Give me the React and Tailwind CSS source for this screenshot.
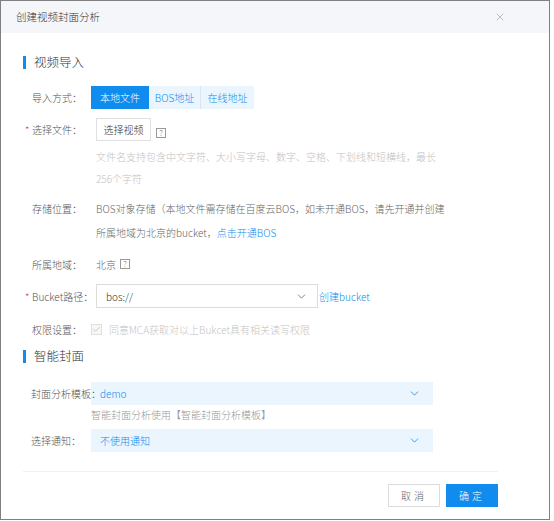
import { ChevronDown, X, Check } from 'lucide-react';

const FONT = { fontFamily: '"Noto Sans CJK SC", "Noto Sans", sans-serif' };

function Label({ required, children, className = '' }) {
  return (
    <div className={`relative w-[59px] shrink-0 whitespace-nowrap text-[10px] text-[#555] ${className}`}>
      {required && <span className="absolute left-[-7px] top-0 text-[#ea2e2e]">*</span>}
      {children}
    </div>
  );
}

function Help() {
  return (
    <span className="inline-flex h-[10px] w-[10px] items-center justify-center border border-[#999] text-[8px] leading-none text-[#666]">
      ?
    </span>
  );
}

function SectionTitle({ children, className = '' }) {
  return (
    <div className={`flex h-[20px] items-center ${className}`}>
      <span className="h-[13px] w-[3px] bg-[#108cee]" />
      <span className="ml-[8px] text-[12.5px] text-[#333]">{children}</span>
    </div>
  );
}

function BlueSelect({ value }) {
  return (
    <div className="flex h-[23px] w-[342px] items-center justify-between bg-[#eaf5fe] pl-[9px] pr-[12px] text-[10px] text-[#108cee]">
      <span>{value}</span>
      <ChevronDown size={13} strokeWidth={1.5} className="text-[#108cee]" />
    </div>
  );
}

export default function App() {
  return (
    <div className="h-[521px] w-[554px] bg-white font-light" style={FONT}>
      <div className="flex h-[520px] w-[550px] flex-col border border-[#808080]">
        {/* header */}
        <div className="flex h-[32px] shrink-0 items-center justify-between bg-[#f5f6fa] pl-[15px] pr-[43px]">
          <span className="text-[10.5px] text-[#333]">创建视频封面分析</span>
          <X size={12} strokeWidth={1.2} className="text-[#999]" />
        </div>

        <div className="pl-[22px]">
          <SectionTitle className="mt-[19px]">视频导入</SectionTitle>

          {/* 导入方式 */}
          <div className="mt-[14px] flex items-center pl-[9px]">
            <Label>导入方式：</Label>
            <div className="flex h-[23px] text-[10px]">
              <span className="flex w-[58px] items-center justify-center bg-[#108cee] text-white">本地文件</span>
              <span className="flex w-[52px] items-center justify-center border-r border-[#d8e6f2] bg-[#eaf5fe] text-[#108cee]">BOS地址</span>
              <span className="flex w-[53px] items-center justify-center bg-[#eaf5fe] text-[#108cee]">在线地址</span>
            </div>
          </div>

          {/* 选择文件 */}
          <div className="mt-[8px] flex items-center pl-[9px]">
            <Label required>选择文件：</Label>
            <div className="ml-[5px] flex items-center">
              <span className="flex h-[23px] w-[55px] items-center justify-center border border-[#e0e0e0] text-[10px] text-[#333]">选择视频</span>
              <span className="ml-[5px]"><Help /></span>
            </div>
          </div>
          <div className="mt-[5px] pl-[73px] text-[10px] leading-[22px] text-[#c2c2c2]">
            <div>文件名支持包含中文字符、大小写字母、数字、空格、下划线和短横线，最长</div>
            <div>256个字符</div>
          </div>

          {/* 存储位置 */}
          <div className="mt-[7px] flex items-start pl-[9px] leading-[24px]">
            <Label>存储位置：</Label>
            <div className="ml-[5px] text-[10px] text-[#666]">
              <div>BOS对象存储（本地文件需存储在百度云BOS，如未开通BOS，请先开通并创建</div>
              <div>
                所属地域为北京的bucket，<span className="text-[#108cee]">点击开通BOS</span>
              </div>
            </div>
          </div>

          {/* 所属地域 */}
          <div className="mt-[9px] flex h-[20px] items-center pl-[9px]">
            <Label>所属地域：</Label>
            <div className="ml-[5px] flex items-center gap-[4px] text-[10px] text-[#666]">
              <span>北京</span>
              <Help />
            </div>
          </div>

          {/* Bucket路径 */}
          <div className="mt-[10px] flex items-center pl-[9px]">
            <Label required>Bucket路径：</Label>
            <div className="ml-[5px] flex h-[24px] w-[222px] items-center justify-between border border-[#dcdcdc] pl-[9px] pr-[9px] text-[10px] text-[#333]">
              <span>bos://</span>
              <ChevronDown size={13} strokeWidth={1.5} className="text-[#666]" />
            </div>
            <span className="ml-[1px] text-[10px] text-[#108cee]">创建bucket</span>
          </div>

          {/* 权限设置 */}
          <div className="mt-[11px] flex h-[20px] items-center pl-[9px]">
            <Label>权限设置：</Label>
            <span className="flex h-[11px] w-[11px] items-center justify-center border border-[#e0e0e0] bg-[#f7f7f7]">
              <Check size={9} strokeWidth={2} className="text-[#bbb]" />
            </span>
            <span className="ml-[7px] text-[10px] text-[#c4c4c4]">同意MCA获取对以上Bukcet具有相关读写权限</span>
          </div>

          <SectionTitle className="mt-[7px]">智能封面</SectionTitle>

          {/* 封面分析模板 */}
          <div className="mt-[16px] flex items-center pl-[8px]">
            <Label className="w-[60px]">封面分析模板：</Label>
            <BlueSelect value="demo" />
          </div>
          <div className="mt-[2px] h-[16px] pl-[68px] text-[10px] leading-[16px] text-[#999]">
            智能封面分析使用【智能封面分析模板】
          </div>

          {/* 选择通知 */}
          <div className="mt-[6px] flex items-center pl-[8px]">
            <Label className="w-[60px]">选择通知：</Label>
            <BlueSelect value="不使用通知" />
          </div>

          <div className="mt-[19px] h-px w-[475px] bg-[#eef0f4]" />

          <div className="mt-[12px] flex w-[475px] justify-end gap-[6px] text-[10px]">
            <span className="flex h-[23px] w-[52px] items-center justify-center border border-[#dcdcdc] tracking-[3px] text-[#666]">取消</span>
            <span className="flex h-[23px] w-[52px] items-center justify-center bg-[#108cee] tracking-[3px] text-white">确定</span>
          </div>
        </div>
      </div>
    </div>
  );
}
